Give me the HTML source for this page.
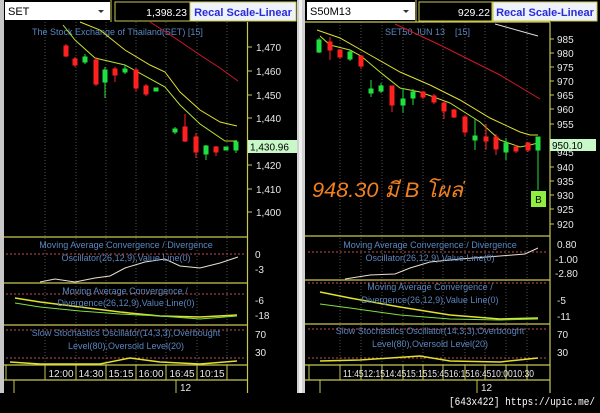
<!DOCTYPE html>
<html><head><meta charset="utf-8"><style>
html,body{margin:0;padding:0;background:#000;}
svg{display:block}
text{font-family:"Liberation Sans",sans-serif;}
</style></head><body>
<svg width="600" height="413" viewBox="0 0 600 413" xmlns="http://www.w3.org/2000/svg">
<rect width="600" height="413" fill="#000"/>
<rect x="0" y="0" width="4" height="393" fill="#c8c8c8"/>
<rect x="297" y="0" width="8" height="393" fill="#d0d0d0"/>
<rect x="299" y="0" width="3" height="393" fill="#f0f0f0"/>

<!-- ========== LEFT PANEL ========== -->
<g>
<rect x="4" y="0" width="293" height="22" fill="#000"/>
<rect x="5" y="2" width="105" height="18" fill="#fff"/>
<text x="8" y="15" font-size="11" fill="#000">SET</text>
<path d="M98 10 L104 10 L101 13 Z" fill="#333"/>
<line x1="111" y1="0" x2="111" y2="22" stroke="#c8c850"/>
<rect x="115" y="2" width="75" height="19" fill="#000" stroke="#c8c850"/>
<text x="187" y="16" font-size="10.5" fill="#fff" text-anchor="end">1,398.23</text>
<rect x="190" y="2" width="106" height="19" fill="#eef2fa" stroke="#c8c850"/>
<text x="243" y="16" font-size="11" fill="#2a2ad8" text-anchor="middle" font-weight="bold">Recal Scale-Linear</text>

<g stroke="#666" stroke-dasharray="1,2" stroke-width="0.8">
<line x1="45" y1="22" x2="45" y2="365"/><line x1="76" y1="22" x2="76" y2="365"/><line x1="106" y1="22" x2="106" y2="365"/><line x1="136" y1="22" x2="136" y2="365"/><line x1="166" y1="22" x2="166" y2="365"/><line x1="197" y1="22" x2="197" y2="365"/><line x1="227" y1="22" x2="227" y2="365"/>
</g>
<text x="32" y="35" font-size="9" fill="#5a86c0">The Stock Exchange of Thailand(SET) [15]</text>

<polyline points="150,22 175,38 200,55 220,68 238,81" fill="none" stroke="#d01828" stroke-width="1"/>
<polyline points="80,22 100,30 125,50 150,65 165,72 180,92 200,110 220,122 237,126" fill="none" stroke="#e0e030" stroke-width="1"/>
<polyline points="63,25 75,40 95,58 125,65 165,87 180,105 200,124 225,141 237,141" fill="none" stroke="#b8e030" stroke-width="1"/>
<g stroke-width="1">
<g stroke="#ff2020" fill="#ff2020">
<line x1="66" y1="44" x2="66" y2="57"/><rect x="64" y="46" width="4" height="10"/>
<line x1="75" y1="57" x2="75" y2="67"/><rect x="73" y="59" width="4" height="6"/>
<line x1="96" y1="57" x2="96" y2="86"/><rect x="94" y="60" width="4" height="24"/>
<line x1="115" y1="67" x2="115" y2="82"/><rect x="113" y="69" width="4" height="6"/>
<line x1="136" y1="68" x2="136" y2="92"/><rect x="134" y="70" width="4" height="18"/>
<line x1="146" y1="84" x2="146" y2="96"/><rect x="144" y="86" width="4" height="8"/>
<line x1="185" y1="114" x2="185" y2="142"/><rect x="183" y="127" width="4" height="14"/>
<line x1="196" y1="133" x2="196" y2="158"/><rect x="194" y="137" width="4" height="15"/>
<line x1="216" y1="146" x2="216" y2="156"/><rect x="214" y="147" width="4" height="5"/>
</g>
<g stroke="#20e040" fill="#20e040">
<line x1="85" y1="54" x2="85" y2="64"/><rect x="83" y="57" width="4" height="5"/>
<line x1="105" y1="67" x2="105" y2="98"/><rect x="103" y="70" width="4" height="12"/>
<line x1="125" y1="65" x2="125" y2="74"/><rect x="123" y="69" width="4" height="3"/>
<rect x="154" y="88" width="4" height="3"/>
<line x1="175" y1="127" x2="175" y2="134"/><rect x="173" y="129" width="4" height="3"/>
<line x1="206" y1="145" x2="206" y2="160"/><rect x="204" y="146" width="4" height="8"/>
<rect x="224" y="147" width="4" height="3"/>
<line x1="236" y1="140" x2="236" y2="153"/><rect x="234" y="142" width="4" height="8"/>
</g>
</g>

<line x1="247.5" y1="22" x2="247.5" y2="393" stroke="#c8c850" stroke-width="1.2"/>
<g font-size="10" fill="#e8e8e8">
<text x="256" y="51">1,470</text><text x="256" y="75">1,460</text><text x="256" y="99">1,450</text><text x="256" y="122">1,440</text>
<text x="256" y="169">1,420</text><text x="256" y="193">1,410</text><text x="256" y="216">1,400</text>
</g>
<g stroke="#c8c850"><line x1="248" y1="47" x2="252" y2="47"/><line x1="248" y1="71" x2="252" y2="71"/><line x1="248" y1="95" x2="252" y2="95"/><line x1="248" y1="118" x2="252" y2="118"/><line x1="248" y1="165" x2="252" y2="165"/><line x1="248" y1="189" x2="252" y2="189"/><line x1="248" y1="212" x2="252" y2="212"/></g>
<rect x="248" y="140" width="49" height="13" fill="#c8f8c8"/>
<text x="250" y="150.5" font-size="10" fill="#000">1,430.96</text>

<g stroke="#c8c850" stroke-width="1.2">
<line x1="4" y1="237" x2="248" y2="237"/><line x1="4" y1="283" x2="248" y2="283"/><line x1="4" y1="325" x2="248" y2="325"/>
<line x1="4" y1="365" x2="248" y2="365"/><line x1="4" y1="380" x2="248" y2="380"/>
</g>
<g stroke="#c05050" stroke-dasharray="2,2"><line x1="6" y1="254" x2="246" y2="254"/><line x1="6" y1="294" x2="246" y2="294"/><line x1="6" y1="330" x2="246" y2="330"/><line x1="6" y1="358" x2="246" y2="358"/></g>
<polyline points="40,282 55,279 75,282 95,278 110,276 125,268 145,262 165,259 180,266 200,268 220,263 238,257" fill="none" stroke="#e8e0d0"/>
<polyline points="15,298 40,302 80,307 120,312 160,316 200,317 237,315" fill="none" stroke="#e0e030" stroke-width="1.5"/>
<polyline points="15,303 40,307 80,311 120,314 160,316 200,319 237,316" fill="none" stroke="#80e040"/>
<polyline points="10,362 40,364 100,364 130,358 160,362 200,364 237,361" fill="none" stroke="#e0e030" stroke-width="1.5"/>
<g font-size="9" fill="#5a86c0" text-anchor="middle">
<text x="126" y="248">Moving Average Convergence / Divergence</text>
<text x="126" y="261">Oscillator(26,12,9),Value Line(0)</text>
<text x="125" y="294">Moving Average Convergence /</text>
<text x="126" y="306">Divergence(26,12,9),Value Line(0)</text>
<text x="126" y="336">Slow Stochastics Oscillator(14,3,3),Overbought</text>
<text x="126" y="349">Level(80),Oversold Level(20)</text>
</g>
<g font-size="10" fill="#e8e8e8">
<text x="255" y="258">0</text><text x="255" y="273">-3</text><text x="255" y="304">-6</text><text x="255" y="319">-18</text><text x="255" y="338">70</text><text x="255" y="356">30</text>
</g>
<g stroke="#c8c850"><line x1="45" y1="365" x2="45" y2="380"/><line x1="76" y1="365" x2="76" y2="380"/><line x1="106" y1="365" x2="106" y2="380"/><line x1="136" y1="365" x2="136" y2="380"/><line x1="166" y1="365" x2="166" y2="380"/><line x1="197" y1="365" x2="197" y2="380"/><line x1="227" y1="365" x2="227" y2="380"/>
<line x1="6" y1="365" x2="6" y2="380"/><line x1="14" y1="380" x2="14" y2="393"/><line x1="176" y1="380" x2="176" y2="393"/></g>
<g font-size="10" fill="#e8e8e8" text-anchor="middle"><text x="61" y="377">12:00</text><text x="91" y="377">14:30</text><text x="121" y="377">15:15</text><text x="151" y="377">16:00</text><text x="182" y="377">16:45</text><text x="212" y="377">10:15</text></g>
<text x="180" y="391" font-size="10" fill="#e8e8e8">12</text>
</g>

<!-- ========== RIGHT PANEL ========== -->
<g>
<rect x="307" y="2" width="108" height="18" fill="#fff"/>
<text x="310" y="15" font-size="11" fill="#000">S50M13</text>
<path d="M403 10 L409 10 L406 13 Z" fill="#333"/>
<line x1="416" y1="0" x2="416" y2="22" stroke="#c8c850"/>
<rect x="419" y="2" width="73" height="19" fill="#000" stroke="#c8c850"/>
<text x="490" y="16" font-size="10.5" fill="#fff" text-anchor="end">929.22</text>
<rect x="493" y="2" width="104" height="19" fill="#eef2fa" stroke="#c8c850"/>
<text x="545" y="16" font-size="11" fill="#2a2ad8" text-anchor="middle" font-weight="bold">Recal Scale-Linear</text>

<g stroke="#666" stroke-dasharray="1,2" stroke-width="0.8">
<line x1="340" y1="22" x2="340" y2="365"/><line x1="361" y1="22" x2="361" y2="365"/><line x1="382" y1="22" x2="382" y2="365"/><line x1="403" y1="22" x2="403" y2="365"/><line x1="423" y1="22" x2="423" y2="365"/><line x1="443" y1="22" x2="443" y2="365"/><line x1="465" y1="22" x2="465" y2="365"/><line x1="485" y1="22" x2="485" y2="365"/><line x1="506" y1="22" x2="506" y2="365"/><line x1="527" y1="22" x2="527" y2="365"/>
</g>
<text x="385" y="35" font-size="9" fill="#5a86c0" xml:space="preserve">SET50 JUN 13    [15]</text>

<polyline points="395,24 440,45 500,75 540,99" fill="none" stroke="#d01828"/>
<polyline points="495,24 538,36" fill="none" stroke="#e0e0e0"/>
<polyline points="317,30 340,38 370,55 400,72 430,85 460,100 490,118 520,132 530,135 538,135" fill="none" stroke="#e0e030"/>
<polyline points="320,36 330,45 350,50 361,56 380,72 400,88 420,92 450,103 480,122 500,140 520,147 530,145 538,143" fill="none" stroke="#b8e030"/>
<g>
<g stroke="#ff2020" fill="#ff2020">
<line x1="330" y1="37" x2="330" y2="60"/><rect x="328" y="42" width="4" height="8"/>
<line x1="340" y1="49" x2="340" y2="59"/><rect x="338" y="50" width="4" height="7"/>
<line x1="361" y1="55" x2="361" y2="69"/><rect x="359" y="56" width="4" height="10"/>
<line x1="392" y1="86" x2="392" y2="112"/><rect x="390" y="86" width="4" height="19"/>
<line x1="423" y1="91" x2="423" y2="99"/><rect x="421" y="92" width="4" height="5"/>
<line x1="434" y1="94" x2="434" y2="104"/><rect x="432" y="96" width="4" height="6"/>
<line x1="444" y1="101" x2="444" y2="119"/><rect x="442" y="103" width="4" height="8"/>
<line x1="454" y1="109" x2="454" y2="118"/><rect x="452" y="110" width="4" height="7"/>
<line x1="465" y1="115" x2="465" y2="136"/><rect x="463" y="117" width="4" height="15"/>
<line x1="486" y1="124" x2="486" y2="150"/><rect x="484" y="137" width="4" height="4"/>
<line x1="496" y1="134" x2="496" y2="155"/><rect x="494" y="137" width="4" height="12"/>
<line x1="516" y1="145" x2="516" y2="153"/><rect x="514" y="147" width="4" height="4"/>
<line x1="528" y1="142" x2="528" y2="152"/><rect x="526" y="143" width="4" height="7"/>
</g>
<g stroke="#20e040" fill="#20e040">
<line x1="319" y1="38" x2="319" y2="53"/><rect x="317" y="40" width="4" height="12"/>
<line x1="350" y1="50" x2="350" y2="61"/><rect x="348" y="52" width="4" height="7"/>
<line x1="371" y1="80" x2="371" y2="97"/><rect x="369" y="89" width="4" height="4"/>
<line x1="381" y1="83" x2="381" y2="93"/><rect x="379" y="86" width="4" height="5"/>
<line x1="403" y1="88" x2="403" y2="113"/><rect x="401" y="99" width="4" height="6"/>
<line x1="413" y1="89" x2="413" y2="105"/><rect x="411" y="92" width="4" height="6"/>
<line x1="475" y1="119" x2="475" y2="150"/><rect x="473" y="136" width="4" height="4"/>
<line x1="506" y1="138" x2="506" y2="160"/><rect x="504" y="143" width="4" height="9"/>
<line x1="538" y1="137" x2="538" y2="190"/><rect x="536" y="137" width="4" height="13"/>
</g>
</g>
<rect x="531" y="191" width="15" height="16" fill="#90ee40"/>
<text x="538.5" y="203" font-size="10" fill="#000" text-anchor="middle">B</text>
<text x="312" y="197" font-size="21" font-style="italic" fill="#f08020" textLength="151" lengthAdjust="spacingAndGlyphs" style="font-family:'Liberation Sans','DejaVu Sans',sans-serif">948.30 มี B โผล่</text>

<line x1="550" y1="22" x2="550" y2="393" stroke="#c8c850" stroke-width="1.2"/>
<g font-size="10" fill="#e8e8e8">
<text x="557" y="43">985</text><text x="557" y="57">980</text><text x="557" y="71">975</text><text x="557" y="85">970</text><text x="557" y="99">965</text><text x="557" y="113">960</text><text x="557" y="128">955</text><text x="557" y="156">945</text><text x="557" y="171">940</text><text x="557" y="185">935</text><text x="557" y="199">930</text><text x="557" y="213">925</text><text x="557" y="228">920</text>
</g>
<g stroke="#c8c850"><line x1="550" y1="39" x2="554" y2="39"/><line x1="550" y1="53" x2="554" y2="53"/><line x1="550" y1="67" x2="554" y2="67"/><line x1="550" y1="81" x2="554" y2="81"/><line x1="550" y1="95" x2="554" y2="95"/><line x1="550" y1="109" x2="554" y2="109"/><line x1="550" y1="124" x2="554" y2="124"/><line x1="550" y1="167" x2="554" y2="167"/><line x1="550" y1="181" x2="554" y2="181"/><line x1="550" y1="195" x2="554" y2="195"/><line x1="550" y1="209" x2="554" y2="209"/><line x1="550" y1="224" x2="554" y2="224"/></g>
<rect x="550" y="139" width="46" height="12" fill="#c8f8c8"/>
<text x="552" y="149" font-size="10" fill="#000">950.10</text>

<g stroke="#c8c850" stroke-width="1.2">
<line x1="305" y1="22" x2="550" y2="22"/>
<line x1="305" y1="236" x2="550" y2="236"/><line x1="305" y1="280" x2="550" y2="280"/><line x1="305" y1="324" x2="550" y2="324"/>
<line x1="305" y1="365" x2="550" y2="365"/><line x1="305" y1="380" x2="550" y2="380"/>
</g>
<g stroke="#c05050" stroke-dasharray="2,2"><line x1="308" y1="252" x2="548" y2="252"/><line x1="308" y1="283" x2="548" y2="283"/><line x1="308" y1="329" x2="548" y2="329"/><line x1="308" y1="358" x2="548" y2="358"/></g>
<polyline points="345,279 370,275 395,274 410,268 430,262 460,259 500,256 525,254 538,248" fill="none" stroke="#e8e0d0"/>
<polyline points="320,292 350,298 400,307 450,315 500,319 538,318" fill="none" stroke="#e0e030" stroke-width="1.5"/>
<polyline points="320,304 350,308 400,315 450,319 500,320 538,319" fill="none" stroke="#80e040"/>
<polyline points="320,361 360,360 420,356 450,361 500,362 538,358" fill="none" stroke="#e0e030" stroke-width="1.5"/>
<g font-size="9" fill="#5a86c0" text-anchor="middle">
<text x="430" y="248">Moving Average Convergence / Divergence</text>
<text x="430" y="261">Oscillator(26,12,9),Value Line(0)</text>
<text x="430" y="290">Moving Average Convergence /</text>
<text x="430" y="303">Divergence(26,12,9),Value Line(0)</text>
<text x="430" y="334">Slow Stochastics Oscillator(14,3,3),Overbought</text>
<text x="430" y="347">Level(80),Oversold Level(20)</text>
</g>
<g font-size="10" fill="#e8e8e8">
<text x="557" y="248">0.80</text><text x="555" y="263">-1.00</text><text x="555" y="277">-2.80</text><text x="557" y="304">-5</text><text x="557" y="320">-11</text><text x="557" y="338">70</text><text x="557" y="356">30</text>
</g>
<g stroke="#c8c850"><line x1="309" y1="365" x2="309" y2="380"/><line x1="340" y1="365" x2="340" y2="380"/><line x1="361" y1="365" x2="361" y2="380"/><line x1="382" y1="365" x2="382" y2="380"/><line x1="403" y1="365" x2="403" y2="380"/><line x1="423" y1="365" x2="423" y2="380"/><line x1="443" y1="365" x2="443" y2="380"/><line x1="465" y1="365" x2="465" y2="380"/><line x1="485" y1="365" x2="485" y2="380"/><line x1="506" y1="365" x2="506" y2="380"/><line x1="527" y1="365" x2="527" y2="380"/>
<line x1="320" y1="380" x2="320" y2="393"/><line x1="477" y1="380" x2="477" y2="393"/></g>
<text x="343" y="377" font-size="10" fill="#e8e8e8" textLength="191" lengthAdjust="spacingAndGlyphs">11:4512:1514:4515:1515:4516:1516:4510:0010:30</text>
<text x="481" y="391" font-size="10" fill="#e8e8e8">12</text>
</g>

<text x="449" y="405" font-size="11" fill="#fff" textLength="146" lengthAdjust="spacingAndGlyphs" style="font-family:'Liberation Mono',monospace">[643x422] https://upic.me/</text>
</svg>
</body></html>
